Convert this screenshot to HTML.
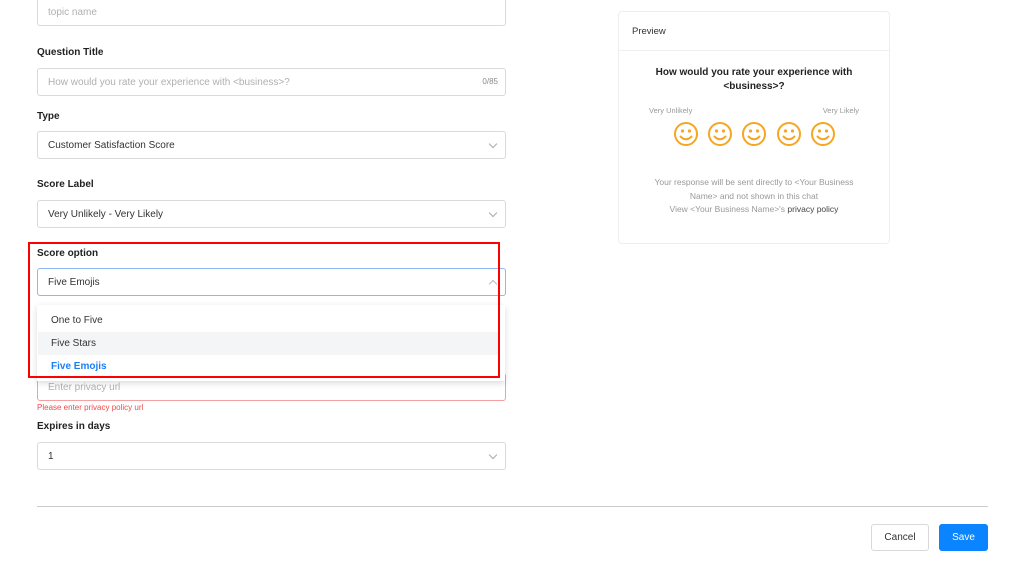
<!DOCTYPE html>
<html><head><meta charset="utf-8"><style>
*{box-sizing:border-box;margin:0;padding:0}
body{width:1024px;height:569px;overflow:hidden;background:#fff;font-family:"Liberation Sans",sans-serif;position:relative;color:#333}
.a{position:absolute}
.lbl{position:absolute;left:37px;font-size:10px;font-weight:bold;color:#222}
.in{position:absolute;left:37px;width:469px;height:28px;border:1px solid #d9d9d9;border-radius:3px;font-size:10px;line-height:26px;padding-left:10px;padding-top:1px;color:#333}
.ph{color:#b0b0b0}
.chev{position:absolute;right:9px;top:9px;width:6px;height:6px;border-right:1px solid #aaa;border-bottom:1px solid #aaa;transform:rotate(45deg)}
.item{position:absolute;left:38px;width:462px;height:23px;font-size:10px;line-height:23px;padding-left:13px;color:#333}
.ctr{text-align:center}
</style></head><body>
<div class="in ph" style="top:-2px">topic name</div>
<div class="lbl" style="top:47px">Question Title</div>
<div class="in ph" style="top:68px">How would you rate your experience with &lt;business&gt;?<span class="a" style="right:7px;top:0;font-size:8px;color:#888">0/85</span></div>
<div class="lbl" style="top:111px">Type</div>
<div class="in" style="top:131px">Customer Satisfaction Score<span class="chev"></span></div>
<div class="lbl" style="top:179px">Score Label</div>
<div class="in" style="top:200px">Very Unlikely - Very Likely<span class="chev"></span></div>
<div class="lbl" style="top:248px">Score option</div>
<div class="in" style="top:268px;border-color:#8db8f0">Five Emojis<span class="chev" style="transform:rotate(-135deg);top:12px;border-color:#bbb"></span></div>
<div class="in ph" style="top:373px;border-color:#f5a0a0">Enter privacy url</div>
<div class="a" style="left:37px;top:403px;font-size:8px;color:#f04a4a">Please enter privacy policy url</div>
<div class="a" style="left:37px;top:305px;width:468px;height:76px;background:#fff;box-shadow:0 2px 6px rgba(0,0,0,.15)"></div>
<div class="item" style="top:309px">One to Five</div>
<div class="item" style="top:332px;background:#f4f5f7">Five Stars</div>
<div class="item" style="top:355px;color:#1a7ff5;font-weight:bold">Five Emojis</div>
<div class="a" style="left:28px;top:242px;width:472px;height:136px;border:2px solid #f00"></div>
<div class="lbl" style="top:421px">Expires in days</div>
<div class="in" style="top:442px">1<span class="chev"></span></div>
<div class="a" style="left:37px;top:506px;width:951px;height:1px;background:#ccc"></div>
<div class="a ctr" style="left:871px;top:524px;width:58px;height:27px;border:1px solid #d9d9d9;border-radius:3px;font-size:10px;line-height:25px">Cancel</div>
<div class="a ctr" style="left:939px;top:524px;width:49px;height:27px;background:#0a84ff;border-radius:3px;font-size:10px;line-height:27px;color:#fff">Save</div>
<div class="a" style="left:618px;top:11px;width:272px;height:233px;border:1px solid #eee;border-radius:4px">
<div class="a" style="left:13px;top:14px;font-size:9.5px;color:#333">Preview</div>
<div class="a" style="left:0;top:38px;width:270px;height:1px;background:#f0f0f0"></div>
<div class="a ctr" style="left:0;top:54px;width:270px;font-size:10px;font-weight:bold;line-height:14px;color:#222">How would you rate your experience with<br>&lt;business&gt;?</div>
<div class="a" style="left:30px;top:94px;font-size:7.5px;color:#999">Very Unlikely</div>
<div class="a" style="right:30px;top:94px;font-size:7.5px;color:#999">Very Likely</div>
<svg class="a" style="left:54px;top:110px" width="168" height="26" viewBox="0 0 168 26">
<g fill="none" stroke="#f5a623" stroke-width="2" stroke-linecap="round">
<g id="e"><circle cx="13" cy="12" r="11"/><path d="M7.5 14.5 Q13 20 18.5 14.5"/><circle cx="9.5" cy="9" r=".6" fill="#f5a623"/><circle cx="16.5" cy="9" r=".6" fill="#f5a623"/></g>
<use href="#e" x="34"/><use href="#e" x="68"/><use href="#e" x="103"/><use href="#e" x="137"/>
</g></svg>
<div class="a ctr" style="left:0;top:164px;width:270px;font-size:8.5px;line-height:13.5px;color:#999">Your response will be sent directly to &lt;Your Business<br>Name&gt; and not shown in this chat<br>View &lt;Your Business Name&gt;'s <span style="color:#444">privacy policy</span></div>
</div>
</body></html>
